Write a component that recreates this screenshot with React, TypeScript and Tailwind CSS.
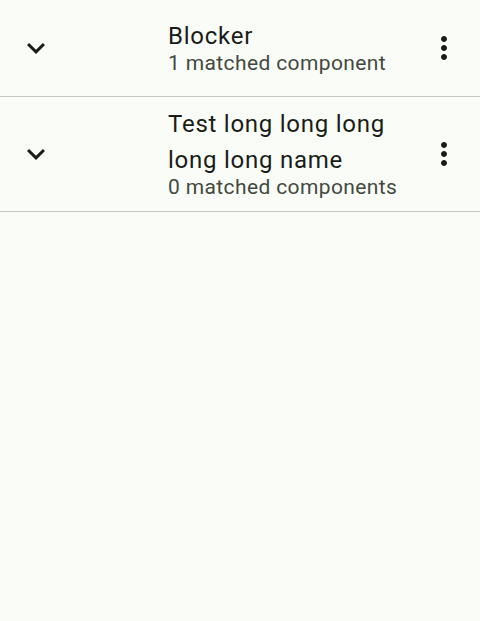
const rules = [
  { name: 'Blocker', matched: '1 matched component' },
  { name: 'Test long long long long long name', matched: '0 matched components' },
];

function ExpandMore() {
  return (
    <svg viewBox="0 0 24 24" className="w-9 h-9 fill-[#1a1c19]">
      <path d="M16.59 8.59L12 13.17 7.41 8.59 6 10l6 6 6-6z" />
    </svg>
  );
}

function MoreVert() {
  return (
    <svg viewBox="0 0 24 24" className="w-9 h-9 fill-[#1a1c19]">
      <path d="M12 8c1.1 0 2-.9 2-2s-.9-2-2-2-2 .9-2 2 .9 2 2 2zm0 2c-1.1 0-2 .9-2 2s.9 2 2 2 2-.9 2-2-.9-2-2-2zm0 6c-1.1 0-2 .9-2 2s.9 2 2 2 2-.9 2-2-.9-2-2-2z" />
    </svg>
  );
}

function RuleRow({ name, matched }: { name: string; matched: string }) {
  return (
    <div className="flex items-center min-h-[97px] py-[9px] border-b border-[#c4c8bf]">
      <div className="w-[72px] flex justify-center">
        <ExpandMore />
      </div>
      <div className="flex-1 ml-[96px] flex flex-col">
        <div className="text-[24px] leading-[36px] tracking-[0.75px] text-[#1a1c19]">{name}</div>
        <div className="text-[21px] leading-[19px] pb-[5px] tracking-[0.375px] text-[#434941]">
          {matched}
        </div>
      </div>
      <div className="w-9 mr-[18px] flex justify-center">
        <MoreVert />
      </div>
    </div>
  );
}

export default function App() {
  return (
    <div className="w-[480px] h-[621px] bg-[#fafdf7] font-['Roboto',sans-serif]">
      {rules.map(r => (
        <RuleRow key={r.name} name={r.name} matched={r.matched} />
      ))}
    </div>
  );
}
